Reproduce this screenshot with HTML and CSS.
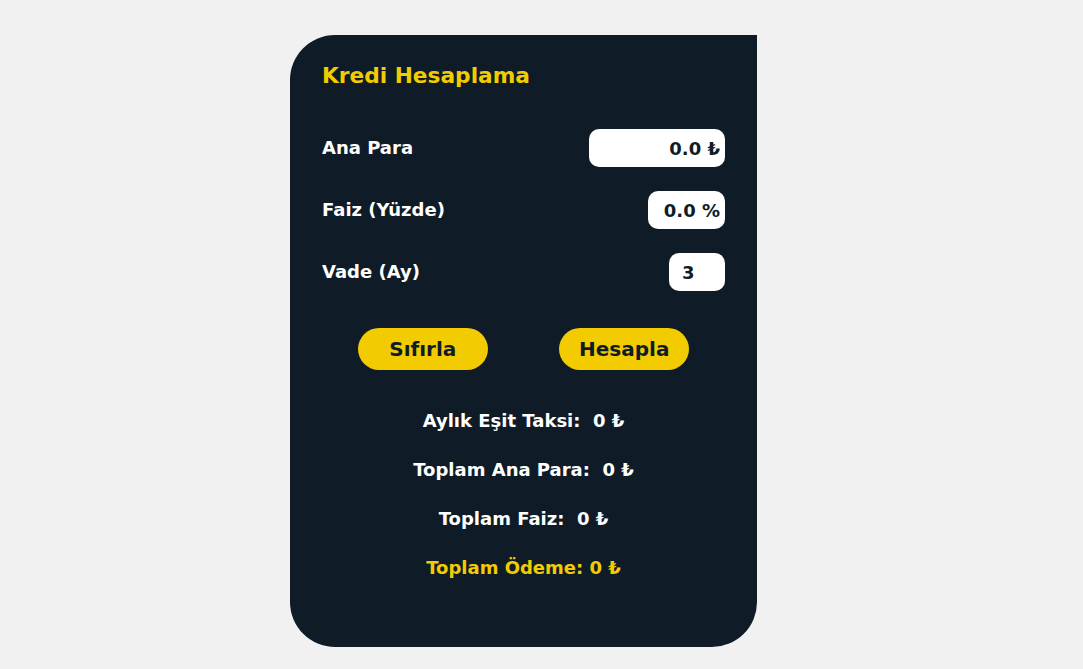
FILE: index.html
```html
<!DOCTYPE html>
<html lang="tr">
<head>
<meta charset="utf-8">
<title>Kredi Hesaplama</title>
<link rel="stylesheet" href="styles.css">
</head>
<body>
<main class="card">
  <h1 class="title">Kredi Hesaplama</h1>
  <div class="rows">
    <div class="row">
      <label class="label">Ana Para</label>
      <input class="field field-wide" type="text" value="0.0 ₺">
    </div>
    <div class="row">
      <label class="label">Faiz (Yüzde)</label>
      <input class="field field-mid" type="text" value="0.0 %">
    </div>
    <div class="row">
      <label class="label">Vade (Ay)</label>
      <input class="field field-small" type="text" value="3">
    </div>
  </div>
  <div class="actions">
    <button class="btn" type="button">Sıfırla</button>
    <button class="btn" type="button">Hesapla</button>
  </div>
  <div class="results">
    <p class="result">Aylık Eşit Taksi:&nbsp; 0 ₺</p>
    <p class="result">Toplam Ana Para:&nbsp; 0 ₺</p>
    <p class="result">Toplam Faiz:&nbsp; 0 ₺</p>
    <p class="result result-total">Toplam Ödeme: 0 ₺</p>
  </div>
</main>
</body>
</html>
```

FILE: styles.css
```css
* { box-sizing: border-box; }

html, body {
  margin: 0;
  padding: 0;
  background: #f1f1f1;
  height: 100%;
}

body {
  padding: 35px 0 0 290px;
  font-family: "DejaVu Sans", "Lato", sans-serif;
  font-weight: 700;
}

.card {
  width: 467px;
  height: 612px;
  background: #0f1c27;
  border-radius: 45px 0 45px 45px;
  padding: 27px 32px 0 32px;
  display: flex;
  flex-direction: column;
}

.title {
  margin: 0;
  height: 28px;
  line-height: 28px;
  font-size: 21.7px;
  font-weight: 700;
  color: #f2cc00;
}

.rows {
  margin-top: 39px;
  display: flex;
  flex-direction: column;
  gap: 24px;
}

.row {
  display: flex;
  justify-content: space-between;
  align-items: center;
  height: 38px;
}

.label {
  color: #ffffff;
  font-size: 18px;
  line-height: 36px;
}

.field {
  height: 38px;
  border: none;
  outline: none;
  border-radius: 10px;
  background: #ffffff;
  color: #0f1c27;
  font-family: inherit;
  font-weight: 700;
  font-size: 18px;
  text-align: right;
  padding: 0 5px 0 8px;
}

.field-wide { width: 136px; }
.field-mid { width: 77px; }
.field-small { width: 56px; text-align: left; padding-left: 13px; }

.actions {
  margin-top: 37px;
  display: flex;
  justify-content: space-around;
}

.btn {
  width: 130px;
  height: 42px;
  border: none;
  border-radius: 21px;
  background: #f2cc00;
  color: #0f1c27;
  font-family: inherit;
  font-weight: 700;
  font-size: 20px;
  padding: 0;
}

.results {
  margin-top: 26px;
  display: flex;
  flex-direction: column;
  align-items: center;
}

.result {
  margin: 0;
  line-height: 49px;
  color: #ffffff;
  font-size: 18px;
}

.result-total { color: #f2cc00; }
```
